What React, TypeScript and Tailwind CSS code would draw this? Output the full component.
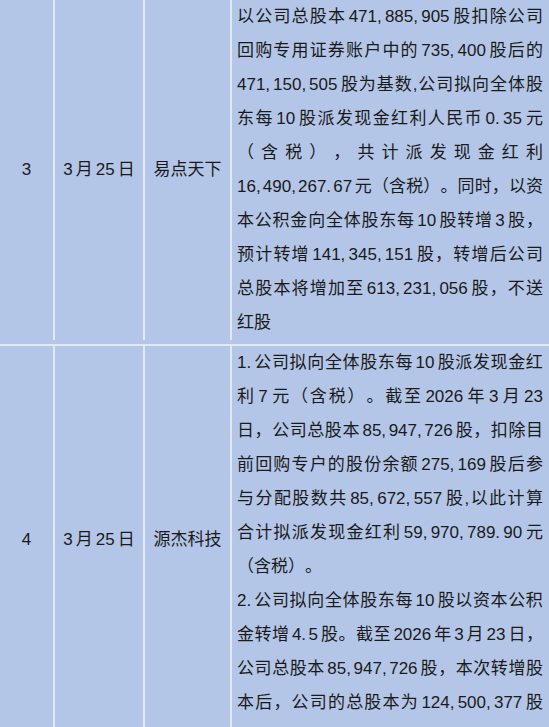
import React from "react";

type Line = { t: string; full?: boolean };

const row3: Line[] = [
  { t: "以公司总股本471,885,905股扣除公司", full: true },
  { t: "回购专用证券账户中的735,400股后的", full: true },
  { t: "471,150,505股为基数,公司拟向全体股", full: true },
  { t: "东每10股派发现金红利人民币0.35元", full: true },
  { t: "（含税），共计派发现金红利", full: true },
  { t: "16,490,267.67元（含税）。同时，以资", full: true },
  { t: "本公积金向全体股东每10股转增3股，", full: true },
  { t: "预计转增141,345,151股，转增后公司", full: true },
  { t: "总股本将增加至613,231,056股，不送", full: true },
  { t: "红股" },
];

const row4: Line[] = [
  { t: "1.公司拟向全体股东每10股派发现金红", full: true },
  { t: "利7元（含税）。截至2026年3月23", full: true },
  { t: "日，公司总股本85,947,726股，扣除目", full: true },
  { t: "前回购专户的股份余额275,169股后参", full: true },
  { t: "与分配股数共85,672,557股,以此计算", full: true },
  { t: "合计拟派发现金红利59,970,789.90元", full: true },
  { t: "（含税）。" },
  { t: "2.公司拟向全体股东每10股以资本公积", full: true },
  { t: "金转增4.5股。截至2026年3月23日，", full: true },
  { t: "公司总股本85,947,726股，本次转增股", full: true },
  { t: "本后，公司的总股本为124,500,377股", full: true },
];

type Tok = { s: string; cls: string };

function tokenize(t: string): Tok[] {
  const toks: Tok[] = [];
  let i = 0;
  while (i < t.length) {
    const c = t[i];
    if (/[0-9]/.test(c)) {
      let j = i;
      while (j < t.length && /[0-9]/.test(t[j])) j++;
      while (j < t.length && /[.,]/.test(t[j]) && j + 1 < t.length && /[0-9]/.test(t[j + 1])) {
        j++;
        while (j < t.length && /[0-9]/.test(t[j])) j++;
      }
      if (j < t.length && t[j] === ".") j++;
      const run = t.slice(i, j);
      const chunks = run.match(/[0-9]+[.,]?/g) || [run];
      chunks.forEach((ch, k) => {
        let cls = "";
        if (k === 0 && i > 0) cls += " ml-[2.5px]";
        if (k === chunks.length - 1) {
          if (j < t.length) cls += " mr-[2.5px]";
        } else {
          cls += " mr-[2px]";
        }
        toks.push({ s: ch, cls });
      });
      i = j;
    } else {
      toks.push({ s: c, cls: "" });
      i++;
    }
  }
  return toks;
}

function Lines({ lines }: { lines: Line[] }) {
  return (
    <div>
      {lines.map((l, i) =>
        l.full ? (
          <div key={i} className="flex justify-between whitespace-nowrap">
            {tokenize(l.t).map((tk, k) => (
              <span key={k} className={tk.cls}>
                {tk.s}
              </span>
            ))}
          </div>
        ) : (
          <div key={i} className="whitespace-nowrap text-left">
            {l.t}
          </div>
        )
      )}
    </div>
  );
}

function Row({
  no,
  name,
  lines,
  className,
}: {
  no: string;
  name: string;
  lines: Line[];
  className: string;
}) {
  return (
    <div className={"flex border-b-2 border-[#e2e9f6] " + className}>
      <div className="w-[55px] shrink-0 border-r-2 border-[#e2e9f6] flex items-center justify-center">
        {no}
      </div>
      <div className="w-[90px] shrink-0 border-r-2 border-[#e2e9f6] flex items-center justify-center">
        <span>3</span>
        <span className="ml-[3px]">月</span>
        <span className="ml-[3px]">25</span>
        <span className="ml-[3px]">日</span>
      </div>
      <div className="w-[87px] shrink-0 border-r-2 border-[#e2e9f6] flex items-center justify-center">
        {name}
      </div>
      <div className="flex-1 min-w-0 pl-[5px] pr-[6px]">
        <Lines lines={lines} />
      </div>
    </div>
  );
}

export default function App() {
  return (
    <div
      className="w-[549px] h-[727px] overflow-hidden bg-[#b4c6e7] text-[#1a1a1a] text-[17px] leading-[34px] [text-spacing-trim:space-all]"
      style={{ fontFamily: '"Liberation Sans", "Noto Sans CJK SC", sans-serif' }}
    >
      <Row no="3" name="易点天下" lines={row3} className="h-[346px] pb-[4px]" />
      <Row no="4" name="源杰科技" lines={row4} className="h-[390px]" />
    </div>
  );
}
